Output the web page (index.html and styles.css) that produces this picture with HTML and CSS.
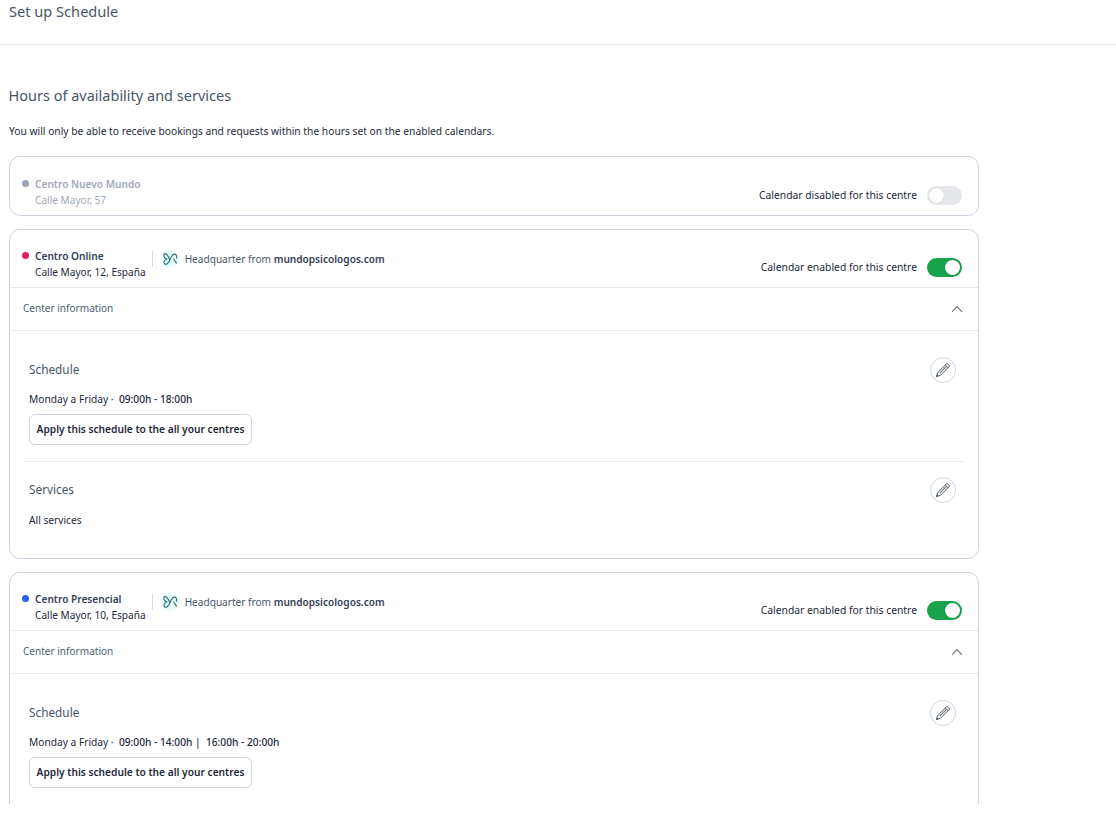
FILE: index.html
```html
<!DOCTYPE html>
<html lang="en">
<head>
<meta charset="utf-8">
<title>Set up Schedule</title>
<link rel="stylesheet" href="styles.css">
</head>
<body>
<svg class="sprite" width="0" height="0" aria-hidden="true">
  <symbol id="pencil" viewBox="0 0 16 16">
    <path d="M12 1.300l2.700 2.700L5.200 13.500l-3.700 1 1-3.700z" fill="#fff" stroke="#4b5563" stroke-width="1" stroke-linejoin="round"/>
    <path d="M10.300 3l2.700 2.700" fill="none" stroke="#4b5563" stroke-width="1"/>
    <path d="M4.200 10.700l6.700-6.700.9.9-6.700 6.700z" fill="#7b8494"/>
    <path d="M1.500 14.500l.5-2 1.500 1.500z" fill="#374151"/>
  </symbol>
  <symbol id="logo" viewBox="0 0 24 24">
    <circle cx="12" cy="12" r="12" fill="#e9fafb"/>
    <path d="M11.500 12.500C10 7.500 6.500 4 4.500 5 2.800 6 3.800 10.500 7.500 12 4.500 13 3 16.500 4.800 18.500 7 20.500 10.500 17 12 13 13.500 9 15.500 5.500 18 5.500 20.500 5.500 21.300 8.500 20.800 11" fill="none" stroke="#1f6f7d" stroke-width="1.400" stroke-linecap="round"/>
    <path d="M17 12l3.500 5.500" fill="none" stroke="#1f6f7d" stroke-width="1.400" stroke-linecap="round"/>
  </symbol>
  <symbol id="chev" viewBox="0 0 12 8">
    <path d="M1 6.800L6 1.500l5 5.300" fill="none" stroke="#6b7280" stroke-width="1.100"/>
  </symbol>
</svg>
<div class="page">
  <header class="topbar"><h1 class="title">Set up Schedule</h1></header>
  <main class="content">
    <h2 class="heading">Hours of availability and services</h2>
    <p class="lead">You will only be able to receive bookings and requests within the hours set on the enabled calendars.</p>

    <section class="card card-off">
      <div class="head">
        <div class="centre">
          <div class="name muted"><span class="dot dot-grey"></span>Centro Nuevo Mundo</div>
          <div class="addr muted">Calle Mayor, 57</div>
        </div>
        <div class="status"><span>Calendar disabled for this centre</span><span class="toggle"><span class="knob"></span></span></div>
      </div>
    </section>

    <section class="card">
      <div class="head head-on">
        <div class="centre">
          <div class="name"><span class="dot dot-pink"></span>Centro Online</div>
          <div class="addr">Calle Mayor, 12, España</div>
        </div>
        <div class="hq"><svg class="logo"><use href="#logo"/></svg><span>Headquarter from <b>mundopsicologos.com</b></span></div>
        <div class="status"><span>Calendar enabled for this centre</span><span class="toggle toggle-on"><span class="knob"></span></span></div>
      </div>
      <div class="info"><span>Center information</span><svg class="chev"><use href="#chev"/></svg></div>
      <div class="body">
        <div class="block">
          <div class="row"><h3 class="sub">Schedule</h3><button class="edit"><svg class="pen"><use href="#pencil"/></svg></button></div>
          <p class="line">Monday a Friday ·&nbsp; <span class="hours">09:00h - 18:00h</span></p>
          <button class="apply">Apply this schedule to the all your centres</button>
        </div>
        <div class="block block-services">
          <div class="row"><h3 class="sub">Services</h3><button class="edit"><svg class="pen"><use href="#pencil"/></svg></button></div>
          <p class="line line-services">All services</p>
        </div>
      </div>
    </section>

    <section class="card">
      <div class="head head-on">
        <div class="centre">
          <div class="name"><span class="dot dot-blue"></span>Centro Presencial</div>
          <div class="addr">Calle Mayor, 10, España</div>
        </div>
        <div class="hq"><svg class="logo"><use href="#logo"/></svg><span>Headquarter from <b>mundopsicologos.com</b></span></div>
        <div class="status"><span>Calendar enabled for this centre</span><span class="toggle toggle-on"><span class="knob"></span></span></div>
      </div>
      <div class="info"><span>Center information</span><svg class="chev"><use href="#chev"/></svg></div>
      <div class="body body-cut">
        <div class="block">
          <div class="row"><h3 class="sub">Schedule</h3><button class="edit"><svg class="pen"><use href="#pencil"/></svg></button></div>
          <p class="line">Monday a Friday ·&nbsp; <span class="hours">09:00h - 14:00h | &nbsp;16:00h - 20:00h</span></p>
          <button class="apply">Apply this schedule to the all your centres</button>
        </div>
      </div>
    </section>
  </main>
</div>
</body>
</html>
```
FILE: styles.css
```css
* { box-sizing: border-box; }
html, body { margin: 0; padding: 0; background: #fff; }
body { font-family: "Noto Sans", "Open Sans", sans-serif; color: #1e293b; }
.sprite { position: absolute; }
.page { height: 804px; overflow: hidden; }
.topbar { height: 45px; border-bottom: 1px solid #e5e9f0; padding: 2px 9px 0; }
.title { margin: 0; font-size: 14.6px; line-height: 18px; font-weight: 400; color: #475569; }
.content { padding: 40px 0 0 9px; width: 979px; }
.heading { margin: 0 0 0 -0.5px; font-size: 14.5px; line-height: 20px; font-weight: 400; color: #475569; }
.lead { margin: 19px 0 0; font-size: 10.25px; line-height: 14px; color: #1e293b; }
.card { border: 1px solid #cdd5e3; border-radius: 11px; margin-top: 13px; background: #fff; }
.card-off { margin-top: 18px; height: 60px; }
.head { display: flex; height: 58px; padding: 19px 16px 0 12px; }
.head-on { padding-top: 18px; border-bottom: 1px solid #e5e9f0; }
.centre { flex: none; }
.name { display: flex; align-items: center; font-size: 10.15px; line-height: 16px; font-weight: 600; color: #334155; }
.addr { font-size: 10.1px; line-height: 16px; padding-left: 13px; color: #1e293b; }
.name.muted, .addr.muted { color: #a0a8b8; }
.dot { width: 7px; height: 7px; border-radius: 50%; margin-right: 6px; margin-top: -2px; }
.dot-grey { background: #9aa3b5; }
.dot-pink { background: #e11d68; }
.dot-blue { background: #2563eb; }
.hq { display: flex; align-items: center; gap: 6px; height: 16px; margin: 3px 0 0 6px; padding-left: 8px; border-left: 1px solid #d7dce5; font-size: 10.1px; color: #475569; }
.hq b { font-weight: 600; color: #334155; }
.logo { width: 18px; height: 18px; }
.status { margin-left: auto; align-self: flex-start; display: flex; align-items: flex-start; gap: 10px; margin-top: 10px; font-size: 10.35px; line-height: 19px; color: #1e293b; }
.toggle { display: block; width: 35px; height: 19px; padding: 2px; border-radius: 10px; background: #e5e7eb; }
.knob { display: block; width: 15px; height: 15px; border-radius: 50%; background: #fff; box-shadow: 0 0 1px rgba(0,0,0,.25); }
.toggle-on { background: #16a34a; display: flex; justify-content: flex-end; }
.info { display: flex; justify-content: space-between; align-items: center; height: 43px; padding: 0 15px 0 13px; border-bottom: 1px solid #e5e9f0; font-size: 10.05px; color: #4b6178; }
.info span { margin-bottom: 2px; }
.chev { width: 12px; height: 8px; }
.body { padding: 0 13px; }
.body-cut { min-height: 200px; }
.block { padding: 26px 9px 16px 6px; }
.block-services { border-top: 1px solid #e5e9f0; padding-top: 15px; height: 97px; }
.row { display: flex; justify-content: space-between; align-items: center; height: 26px; }
.sub { margin: -2px 0 0; font-size: 11.8px; font-weight: 400; color: #475569; }
.edit { display: flex; align-items: center; justify-content: center; width: 26px; height: 26px; padding: 0; border: 1px solid #cdd5e3; border-radius: 50%; background: #fff; }
.pen { width: 16px; height: 16px; }
.line { margin: 9px 0 0; font-size: 10.2px; line-height: 14px; color: #1e293b; }
.line-services { margin-top: 10px; }
.hours { font-weight: 500; }
.apply { display: block; margin-top: 8px; height: 31px; width: 223px; padding: 0 0 2px; border: 1px solid #cdd5e3; border-radius: 6px; background: #fff; font: 600 10.2px "Noto Sans", sans-serif; color: #1e293b; }
```
